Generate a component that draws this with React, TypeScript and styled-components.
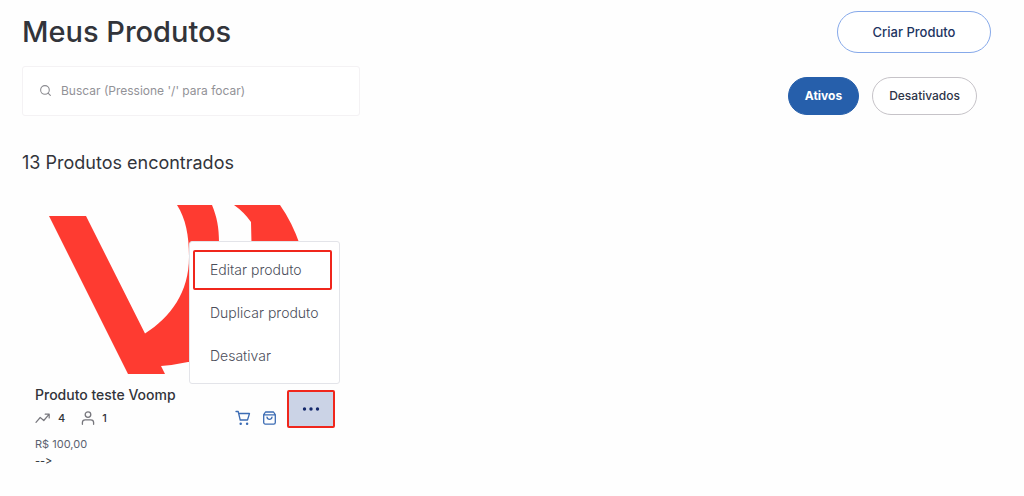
import React from "react";
import styled, { createGlobalStyle } from "styled-components";
import { Search } from "lucide-react";

const GlobalStyle = createGlobalStyle`
  * { box-sizing: border-box; }
  body {
    margin: 0;
    background: #fefefe;
    color: #32343a;
    font-family: Inter, "Liberation Sans", sans-serif;
  }
  button, input { font-family: inherit; }
`;

const Page = styled.main`
  padding: 10px 33px 24px 22px;
`;

const Header = styled.header`
  display: flex;
  align-items: center;
  justify-content: space-between;
`;

const Title = styled.h1`
  margin: 0;
  font-size: 29px;
  line-height: 44px;
  font-weight: 500;
`;

const CreateButton = styled.button`
  height: 42px;
  width: 154px;
  border: 1px solid #86a9ea;
  border-radius: 21px;
  background: #fff;
  color: #1d3461;
  font-size: 13px;
  font-weight: 500;
`;

const Toolbar = styled.div`
  display: flex;
  align-items: center;
  justify-content: space-between;
  margin-top: 12px;
  padding-right: 14px;
`;

const SearchBox = styled.label`
  display: flex;
  align-items: center;
  gap: 9px;
  width: 338px;
  height: 50px;
  padding: 0 16px 2px;
  border: 1px solid #f4f2f4;
  border-radius: 3px;
  background: #fff;
  color: #8b8b90;
`;

const SearchInput = styled.input`
  flex: 1;
  min-width: 0;
  border: 0;
  padding: 0;
  outline: 0;
  background: transparent;
  font-size: 12px;
  color: #55565c;
  &::placeholder { color: #929297; opacity: 1; }
`;

const Filters = styled.div`
  display: flex;
  gap: 13px;
  margin-top: 10px;
`;

const FilterButton = styled.button<{ $active?: boolean }>`
  height: 38px;
  padding: 0 16px 2px;
  border: 1px solid ${(p) => (p.$active ? "#265fab" : "#c6c3c8")};
  border-radius: 19px;
  background: ${(p) => (p.$active ? "#265fab" : "#fff")};
  color: ${(p) => (p.$active ? "#fff" : "#2d3448")};
  font-size: 12px;
  font-weight: ${(p) => (p.$active ? 700 : 500)};
`;

const Count = styled.h2`
  margin: 35px 0 0;
  font-size: 18px;
  line-height: 24px;
  font-weight: 400;
`;

const Card = styled.article`
  position: relative;
  width: 326px;
  margin-top: 30px;
  padding: 0 13px;
`;

const Cover = styled.svg`
  display: block;
  width: 100%;
  height: 169px;
`;

const Details = styled.div`
  display: flex;
  justify-content: space-between;
  margin-top: 11px;
`;

const Info = styled.div`
  display: flex;
  flex-direction: column;
`;

const Name = styled.h3`
  margin: 0;
  font-size: 14px;
  line-height: 20px;
  font-weight: 500;
  white-space: nowrap;
`;

const Stats = styled.div`
  display: flex;
  gap: 16px;
  margin-top: 4px;
`;

const Stat = styled.span`
  display: flex;
  align-items: center;
  gap: 7px;
  height: 18px;
  font-size: 11px;
  font-weight: 500;
  svg { color: #77777d; }
`;

const Price = styled.span`
  margin-top: 8px;
  font-size: 11px;
  line-height: 18px;
  color: #5b6270;
`;

const Note = styled.span`
  font-size: 11px;
  line-height: 16px;
  font-feature-settings: "calt" 0;
`;

const Actions = styled.div`
  display: flex;
  align-items: flex-start;
  gap: 10px;
  margin-top: 5px;
`;

const IconButton = styled.button`
  display: flex;
  margin-top: 20px;
  padding: 0;
  border: 0;
  background: transparent;
  color: #3c6cb4;
`;

const MoreButton = styled.button`
  display: flex;
  align-items: center;
  justify-content: center;
  width: 48px;
  height: 38px;
  padding: 0;
  border: 2px solid #f0261c;
  border-radius: 2px;
  background: #cbd3e6;
  color: #14286b;
`;

const Menu = styled.div`
  position: absolute;
  top: 36px;
  right: 8px;
  display: flex;
  flex-direction: column;
  gap: 3px;
  width: 151px;
  padding: 8px 7px 7px 3px;
  border: 1px solid #e3e4e9;
  border-radius: 3px;
  background: #fff;
`;

const MenuItem = styled.button<{ $marked?: boolean }>`
  height: 40px;
  padding: 0 0 1px 15px;
  border: 2px solid ${(p) => (p.$marked ? "#f0261c" : "transparent")};
  border-radius: 2px;
  background: transparent;
  color: #4b4e5a;
  font-size: 14px;
  font-weight: 300;
  text-align: left;
  white-space: nowrap;
`;

const TrendIcon = () => (
  <svg width="16" height="16" viewBox="0 0 16 16" fill="none" stroke="currentColor" strokeWidth="1.2" strokeLinecap="round" strokeLinejoin="round" aria-hidden>
    <path d="M1 12.300 5.200 7.500 8.800 10.500 14 4.300M10.200 4.200H14.200V8" />
  </svg>
);

const PersonIcon = () => (
  <svg width="14" height="16" viewBox="0 0 14 16" fill="none" stroke="currentColor" strokeWidth="1.3" strokeLinecap="round" strokeLinejoin="round" aria-hidden>
    <circle cx="7" cy="4.6" r="2.8" />
    <path d="M1.400 14.300V12.600Q1.400 9.900 4.200 9.900H9.800Q12.600 9.900 12.600 12.600V14.300" />
  </svg>
);

const CartIcon = () => (
  <svg width="16" height="16" viewBox="0 0 16 16" fill="none" stroke="currentColor" strokeWidth="1.3" strokeLinecap="round" strokeLinejoin="round">
    <path d="M1 1.5h2.200l2 8.500h7.300l2-6.500H4" />
    <circle cx="5.7" cy="13.8" r="0.6" fill="currentColor" />
    <circle cx="12.1" cy="13.8" r="0.6" fill="currentColor" />
  </svg>
);

const BagIcon = () => (
  <svg width="16" height="16" viewBox="0 0 16 16" fill="none" stroke="currentColor" strokeWidth="1.3" strokeLinecap="round" strokeLinejoin="round">
    <path d="M2.700 4.600 4.500 2h8l1.800 2.600v7.900a1.600 1.600 0 0 1-1.600 1.600H4.300a1.600 1.600 0 0 1-1.600-1.600zM2.700 4.800h11.600" />
    <path d="M6 7.200c.5 2.900 4.500 2.900 5 0" />
  </svg>
);

const DotsIcon = () => (
  <svg width="18" height="4" viewBox="0 0 18 4" fill="currentColor">
    <circle cx="2.5" cy="2" r="1.7" />
    <circle cx="9" cy="2" r="1.7" />
    <circle cx="15.5" cy="2" r="1.7" />
  </svg>
);

export default function App() {
  return (
    <>
      <GlobalStyle />
      <Page>
        <Header>
          <Title>Meus Produtos</Title>
          <CreateButton type="button">Criar Produto</CreateButton>
        </Header>
        <Toolbar>
          <SearchBox htmlFor="search">
            <Search size={13} strokeWidth={2} aria-hidden />
            <SearchInput id="search" type="text" aria-label="Buscar" placeholder="Buscar (Pressione '/' para focar)" />
          </SearchBox>
          <Filters>
            <FilterButton type="button" $active aria-pressed="true">Ativos</FilterButton>
            <FilterButton type="button" aria-pressed="false">Desativados</FilterButton>
          </Filters>
        </Toolbar>
        <Count>13 Produtos encontrados</Count>
        <Card>
          <Cover viewBox="0 0 300 169" preserveAspectRatio="xMinYMin meet" fill="#fe3b31" aria-hidden>
            <path d="M14 11H51L110 128.500C136 112 154 87 154 52C154 31 151 14 142 0H177C182 12 184 23 184 37V90C184 130 174 158 153 157Q139 160 126 161L130 169H93Z" />
            <path d="M199 0H245Q257 17 265 40V60H217L216 17Q209 7 199 0Z" />
          </Cover>
          <Details>
            <Info>
              <Name>Produto teste Voomp</Name>
              <Stats>
                <Stat><TrendIcon />4</Stat>
                <Stat><PersonIcon />1</Stat>
              </Stats>
              <Price>R$ 100,00</Price>
              <Note>{"-->"}</Note>
            </Info>
            <Actions>
              <IconButton type="button" aria-label="Carrinho"><CartIcon /></IconButton>
              <IconButton type="button" aria-label="Loja"><BagIcon /></IconButton>
              <MoreButton type="button" aria-label="Mais"><DotsIcon /></MoreButton>
            </Actions>
          </Details>
          <Menu role="menu">
            <MenuItem role="menuitem" type="button" $marked>Editar produto</MenuItem>
            <MenuItem role="menuitem" type="button">Duplicar produto</MenuItem>
            <MenuItem role="menuitem" type="button">Desativar</MenuItem>
          </Menu>
        </Card>
      </Page>
    </>
  );
}
